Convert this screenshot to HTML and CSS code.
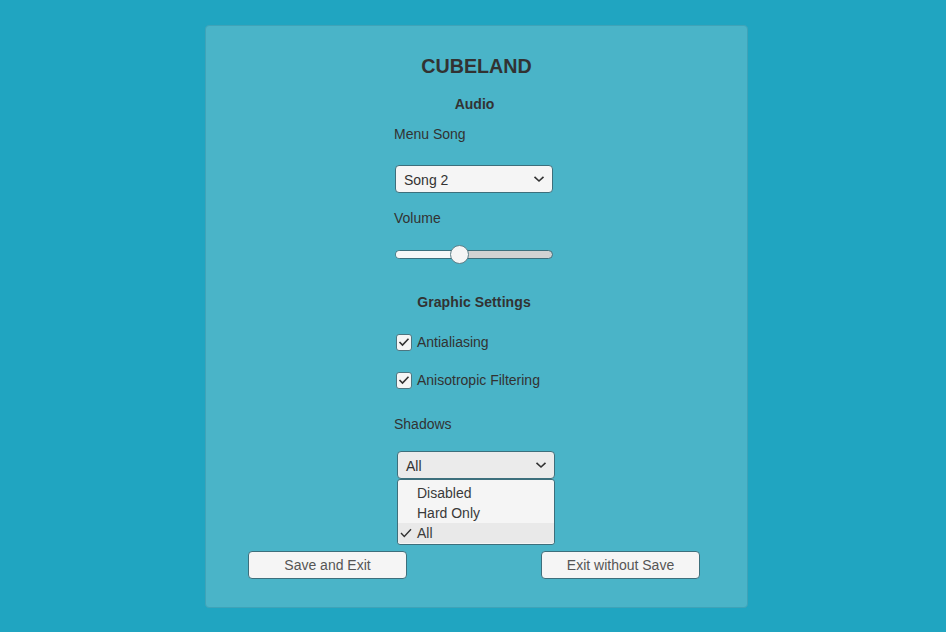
FILE: index.html
```html
<!DOCTYPE html>
<html>
<head>
<meta charset="utf-8">
<link rel="stylesheet" href="styles.css">
</head>
<body>
<div class="panel">
  <h1 class="title">CUBELAND</h1>
  <div class="section">Audio</div>
  <div class="col">
    <div class="label first">Menu Song</div>
    <div class="dropdown">
      <span>Song 2</span>
      <svg class="chev" width="12" height="8" viewBox="0 0 12 8"><path d="M1.5 1.8 L6 6 L10.5 1.8" fill="none" stroke="#323232" stroke-width="1.6"/></svg>
    </div>
    <div class="label vol">Volume</div>
    <div class="slider">
      <div class="track"><div class="fill" style="width:64px"></div></div>
      <div class="handle" style="left:55px"></div>
    </div>
  </div>
  <div class="section gs">Graphic Settings</div>
  <div class="col">
    <div class="check first">
      <div class="box"><svg width="12" height="10" viewBox="0 0 12 10"><path d="M1.5 5 L4.5 8 L10.5 1.8" fill="none" stroke="#323232" stroke-width="1.6"/></svg></div>
      <span>Antialiasing</span>
    </div>
    <div class="check second">
      <div class="box"><svg width="12" height="10" viewBox="0 0 12 10"><path d="M1.5 5 L4.5 8 L10.5 1.8" fill="none" stroke="#323232" stroke-width="1.6"/></svg></div>
      <span>Anisotropic Filtering</span>
    </div>
    <div class="label shadows">Shadows</div>
    <div class="dd-wrap">
      <div class="dropdown open">
        <span>All</span>
        <svg class="chev" width="12" height="8" viewBox="0 0 12 8"><path d="M1.5 1.8 L6 6 L10.5 1.8" fill="none" stroke="#323232" stroke-width="1.6"/></svg>
      </div>
      <div class="list">
        <div class="item">Disabled</div>
        <div class="item">Hard Only</div>
        <div class="item sel"><svg class="tick" width="12" height="10" viewBox="0 0 12 10"><path d="M1 5 L4.3 8.5 L11 1.2" fill="none" stroke="#323232" stroke-width="1.4"/></svg>All</div>
      </div>
    </div>
  </div>
  <div class="buttons">
    <div class="btn">Save and Exit</div>
    <div class="btn">Exit without Save</div>
  </div>
</div>
</body>
</html>
```
FILE: styles.css
```css
html, body {
  margin: 0;
  padding: 0;
}
body {
  background: #20a5c1;
  width: 946px;
  height: 632px;
  font-family: "Liberation Sans", Arial, sans-serif;
  color: #323232;
  padding-top: 25px;
  box-sizing: border-box;
}
.panel {
  margin-left: 205px;
  width: 543px;
  height: 583px;
  box-sizing: border-box;
  background: #4ab4c8;
  border: 1px solid #3fa3b8;
  border-radius: 4px;
  padding-top: 28px;
  display: flex;
  flex-direction: column;
}
.title {
  margin: 0;
  font-size: 19.7px;
  line-height: 24px;
  font-weight: bold;
  text-align: center;
}
.section {
  margin-top: 17px;
  font-size: 14px;
  line-height: 18px;
  font-weight: bold;
  text-align: center;
  margin-left: -4px;
}
.section.gs {
  margin-top: 28px;
  margin-left: -5px;
  letter-spacing: 0.1px;
}
.col {
  margin-left: 188px;
  width: 165px;
  display: flex;
  flex-direction: column;
}
.label {
  font-size: 14px;
  line-height: 18px;
}
.label.first { margin-top: 12px; }
.label.vol { margin-top: 16px; }
.label.shadows { margin-top: 26px; }
.dropdown {
  margin-top: 22px;
  margin-left: 1px;
  width: 158px;
  height: 28px;
  box-sizing: border-box;
  background: #f5f5f5;
  border: 1px solid #3d6f7c;
  border-radius: 4px;
  display: flex;
  align-items: center;
  justify-content: space-between;
  padding: 0 7px 0 8px;
  font-size: 14px;
}
.dropdown span { padding-top: 1px; }
.slider {
  margin-top: 18px;
  margin-left: 1px;
  position: relative;
  width: 158px;
  height: 20px;
}
.track {
  position: absolute;
  left: 0;
  top: 5px;
  width: 158px;
  height: 9px;
  box-sizing: border-box;
  background: #d2d2d2;
  border: 1px solid #3d6f7c;
  border-radius: 5px;
  overflow: hidden;
}
.fill {
  height: 100%;
  background: #f7f7f7;
}
.handle {
  position: absolute;
  top: 0;
  width: 19px;
  height: 19px;
  box-sizing: border-box;
  border-radius: 50%;
  background: #f5f5f5;
  border: 1px solid #5d7f88;
}
.check {
  display: flex;
  align-items: center;
  font-size: 14px;
  height: 18px;
  margin-left: 2px;
}
.check.first { margin-top: 22px; }
.check.second { margin-top: 20px; }
.box {
  width: 16px;
  height: 17px;
  box-sizing: border-box;
  background: #f5f5f5;
  border: 1px solid #4d7580;
  border-radius: 3px;
  display: flex;
  align-items: center;
  justify-content: center;
  margin-right: 5px;
}
.dd-wrap {
  position: relative;
  margin-left: 2px;
}
.dd-wrap .dropdown {
  margin-top: 18px;
  background: #ebebeb;
}
.list {
  position: absolute;
  left: 1px;
  top: 46px;
  width: 158px;
  height: 66px;
  box-sizing: border-box;
  background: #f5f5f5;
  border: 1px solid #3d6f7c;
  border-radius: 3px;
  padding-top: 3px;
  z-index: 2;
}
.item {
  height: 20px;
  line-height: 20px;
  font-size: 14px;
  padding-left: 19px;
  position: relative;
  color: #3a3a3a;
}
.item.sel {
  background: #e9e9e9;
}
.tick {
  position: absolute;
  left: 2px;
  top: 5px;
}
.buttons {
  margin-top: 72px;
  display: flex;
  padding-left: 42px;
  gap: 134px;
}
.btn {
  width: 159px;
  height: 28px;
  box-sizing: border-box;
  background: #f5f5f5;
  border: 1px solid #3d6f7c;
  border-radius: 4px;
  font-size: 14px;
  color: #555;
  display: flex;
  align-items: center;
  justify-content: center;
}
```
